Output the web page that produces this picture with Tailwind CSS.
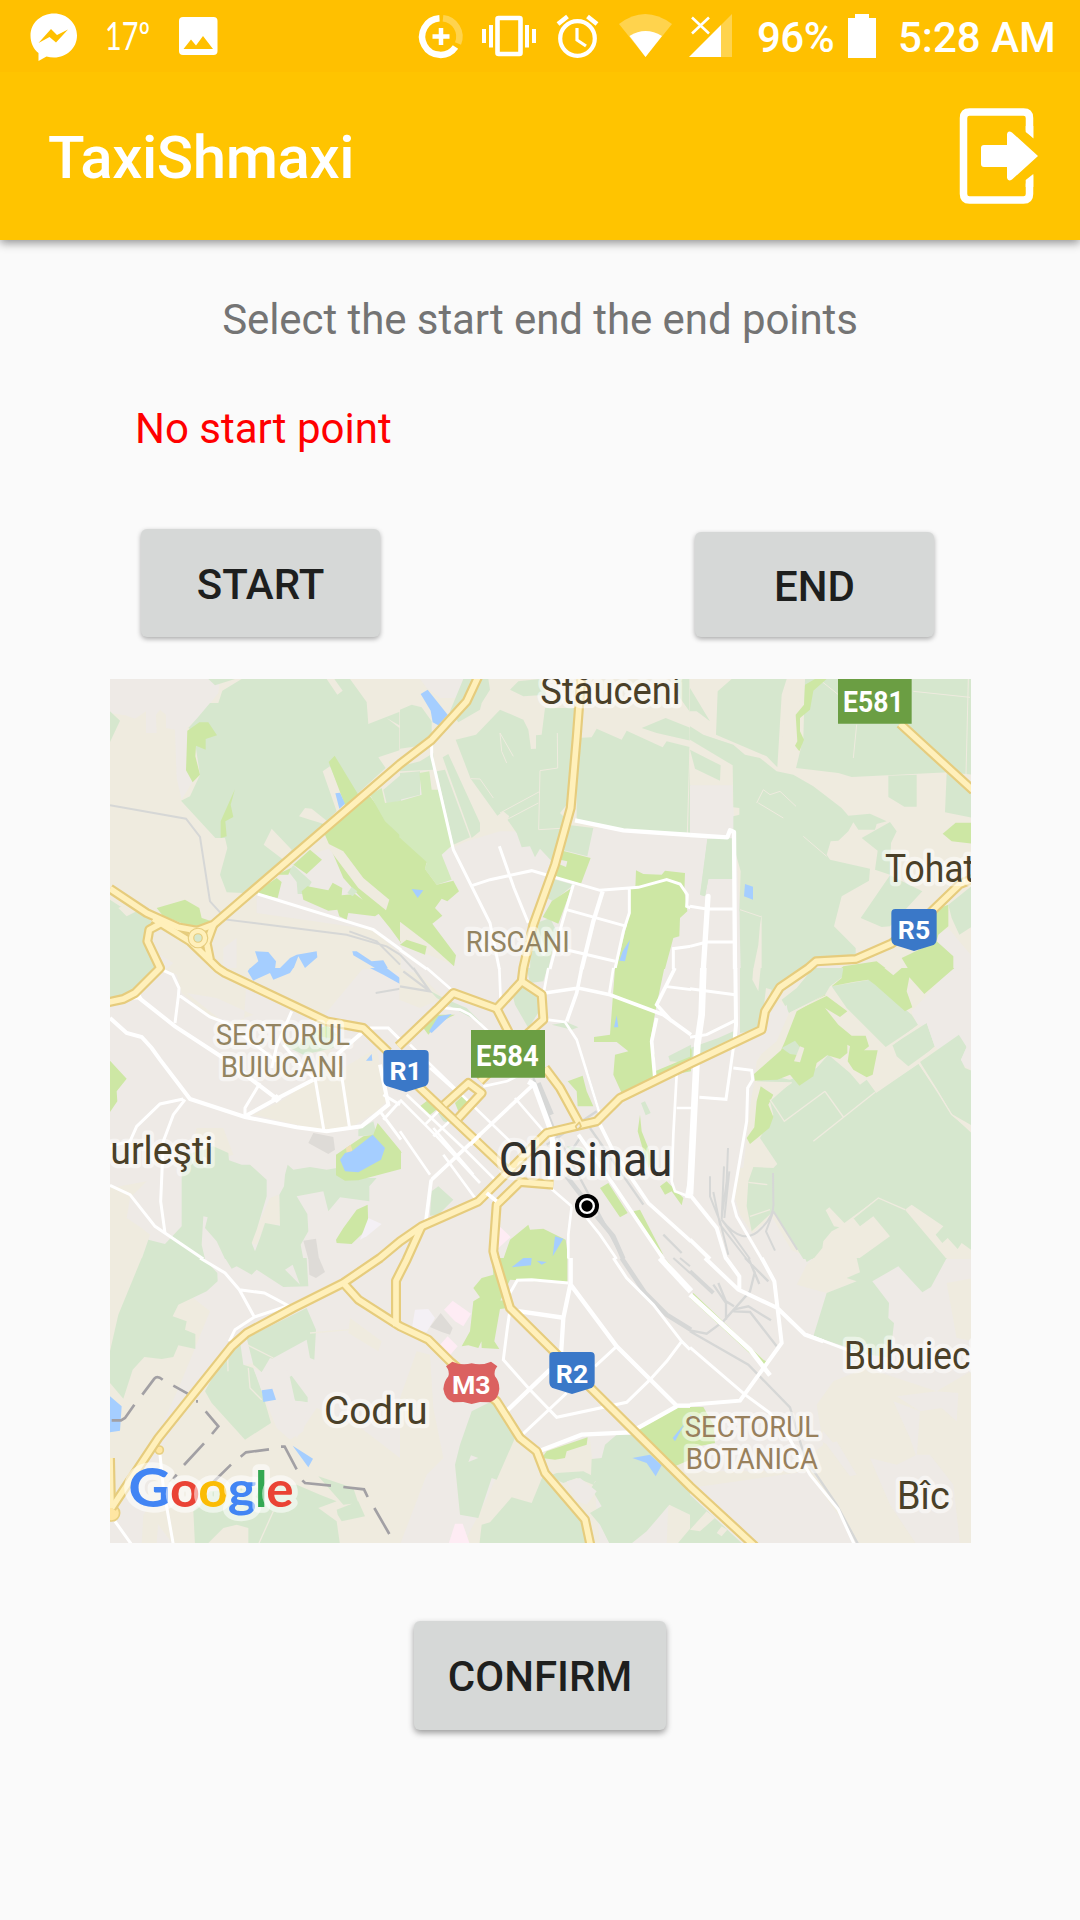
<!DOCTYPE html>
<html lang="en">
<head>
<meta charset="utf-8">
<title>TaxiShmaxi</title>
<script src="https://cdn.jsdelivr.net/npm/@tailwindcss/browser@4"></script>
</head>
<body class="w-[1080px] h-[1920px] bg-[#fafafa] font-['Roboto'] overflow-hidden">
<header class="h-[240px] bg-[#ffc400] shadow-[0_3px_9px_rgba(0,0,0,0.42)] relative">
  <div class="h-[72px] bg-[#ffc000] flex text-white">
    <svg class="w-[90px] h-[72px]" viewBox="0 0 90 72"><path fill="#fff" d="M54 13.5c13 0 23 9.700 23 22S67 57.500 54 57.500q-4-.1-7.500-1l-8 4.500V53c-5-4-8-10-8-17.500 0-12.500 10.500-22 23.500-22z"/><path fill="#ffc000" d="M38.500 43 51 29l6 6 11-5.500L56 42.500l-6.500-5.500z"/></svg>
    <svg class="w-[80px] h-[72px]" viewBox="90 0 80 72"><text x="105" y="50" textLength="45" lengthAdjust="spacingAndGlyphs" font-size="38" font-weight="400" font-family="Lato" fill="#fff">17º</text></svg>
    <svg class="w-[240px] h-[72px]" viewBox="170 0 240 72"><rect x="179" y="17" width="38.500" height="38" rx="4" fill="#fff"/><path fill="#ffc000" d="M183.500 49l7.500-9.500 5 6 7-9.500 10 13z"/></svg>
    <svg class="w-[65px] h-[72px]" viewBox="409.500 0 65 72"><g fill="none" stroke="#fff" stroke-width="6.500"><path d="M439 18.300A18.300 18.300 0 1 0 455 47"/><path opacity=".3" d="M442.500 18.300A18.300 18.300 0 0 1 457.500 43.500"/><path stroke-width="4.500" d="M440.500 28v17M432 36.500h17"/></g></svg>
    <svg class="w-[70px] h-[72px]" viewBox="475 0 70 72"><rect x="497.500" y="18" width="23" height="36" rx="1" fill="none" stroke="#fff" stroke-width="4.600"/><path stroke="#fff" stroke-width="4" d="M484 29v14M491 25v22.500M527 25v22.500M534 29v14"/></svg>
    <svg class="w-[65px] h-[72px]" viewBox="545 0 65 72"><g fill="none" stroke="#fff"><circle cx="577.500" cy="38.500" r="17.300" stroke-width="4.200"/><path stroke-width="3.200" d="M577 28v12l9 6"/><path stroke-width="4.500" d="M558 24l9.500-7.500M597 24l-9.500-7.500"/></g></svg>
    <svg class="w-[70px] h-[72px]" viewBox="610 0 70 72"><path fill="#fff" opacity=".3" d="M619 24q26-20 53 0l-26.500 33z"/><path fill="#fff" d="M629.500 36q16-10 32.500 0L645.500 57z"/></svg>
    <svg class="w-[77px] h-[72px]" viewBox="680 0 77 72"><path fill="#fff" opacity=".3" d="M721 25l11-11v43h-11z"/><path fill="#fff" d="M689 57l32-32v32z"/><path stroke="#fff" stroke-width="2.600" d="M692 17.500l17 16M709 17.500l-17 16"/></svg>
    <span class="w-[90px] text-[42px] leading-[75px] font-medium tracking-[-0.5px] whitespace-nowrap">96%</span>
    <svg class="w-[51px] h-[72px]" viewBox="847 0 51 72"><path fill="#fff" d="M848 18h7v-4h14v4h7v40h-28z"/></svg>
    <span class="text-[42px] leading-[75px] font-medium whitespace-nowrap">5:28 AM</span>
  </div>
  <div class="h-[168px] flex items-center justify-between pl-[48px] pr-[40px]">
    <h1 class="text-[60px] leading-[70px] font-medium text-white pt-[4px] tracking-[-0.4px]">TaxiShmaxi</h1>
    <svg class="w-[84px] h-[100px] mb-[1px]" viewBox="956 106 84 100"><path d="M1029.500 139V118q0-6-6-6h-54q-6 0-6 6v76q0 6 6 6h54q6 0 6-6v-22" fill="none" stroke="#fff" stroke-width="7.500"/><path fill="#ffc400" d="M1021 126l20 20v22l-20 20z"/><path fill="#fff" d="M1025.700 126v6l7.600 6v-12zM1025.700 187v-7l7.600-6v13zM984 145h23v-11q1-4 5-1.500l26 23.500-26 23.500q-4 2.500-5-1.500v-11h-23q-3 0-3-3v-16q0-3 3-3z"/></svg>
  </div>
</header>
<main>
  <p class="pt-[55px] text-[42px] leading-[49px] text-center text-[#747474] tracking-[-0.07px]">Select the start end the end points</p>
  <p class="pt-[60px] pl-[135px] text-[42px] leading-[49px] text-[#ff0000]">No start point</p>
  <div class="mt-[76px] flex items-end justify-between pl-[141px] pr-[146px] text-[42px] font-medium text-[#1e1f1e]">
    <button class="w-[239px] h-[108px] pt-[2px] rounded-[6px] bg-[#d6d8d7] shadow-[0_2px_5px_rgba(0,0,0,0.32)]">START</button>
    <button class="w-[239px] h-[105px] pt-[3px] rounded-[6px] bg-[#d6d8d7] shadow-[0_2px_5px_rgba(0,0,0,0.32)]">END</button>
  </div>
  <!-- Map of Chisinau: three map units per pixel, areas grouped in a 3x3 grid of 870-unit cells -->
  <div class="mt-[42px] ml-[110px] w-[861px] h-[864px] overflow-hidden">
  <svg class="block w-[861px] h-[864px]" viewBox="0 3 2583 2592" font-family="Roboto">
    <defs>
      <g id="major">
        <path d="M1105-5 1070 70 965 185 870 258 310 740 262 758 205 748 110 705 0 632"/>
        <path d="M130 722 240 790 325 872 345 885 650 1030 760 1050 835 1122M262 758 242 770 M310 740 290 795 300 845"/>
        <path d="M155 735 118 755 112 790 150 870 75 945 40 963-5 973"/>
        <path d="M865 1105 980 995 1030 945 1160 992 1235 910 1240 870 1270 740 1335 560 1382 390 1400 180 1414-5"/>
        <path d="M1160 992 1200 1070M1305 1170 1350 1230 1410 1340M1235 910 1295 950 1300 1025 1255 1065 1110 1210"/>
        <path d="M920 1220 1190 1475M1003 1280 1075 1215 1115 1245 1045 1320"/>
        <path d="M5 2490 145 2280 365 2005 410 1965 550 1890 700 1815 810 1740 870 1690 935 1645 1105 1570 1310 1365 1395 1345 1460 1330 1530 1260 1740 1157 1955 1055 1965 1000 2010 928 2095 870 2118 850 2238 843 2344 797 2430 735 2470 695 2550 618 2590 602"/>
        <path d="M1330 1520 1230 1512 1160 1580 1150 1720 1155 1740 1200 1890 1740 2425 1935 2605"/>
        <path d="M700 1815 745 1865 870 1945 955 1985 1020 2050 1160 2170 1230 2280 1280 2320 1305 2385 1425 2525 1442 2605"/>
        <path d="M935 1645 890 1745 858 1808 858 1945M2370 137 2590 338M0 2340 3 2490"/>
      </g>
      <path id="shield" d="M-56 0H56Q68 0 68 12V90Q68 104 56 109L0 126-56 109Q-68 104-68 90V12Q-68 0-56 0Z"/>
    </defs>
    <rect width="2583" height="2600" fill="#eeeae6"/>

    <!-- north-west -->
    <g>
      <path fill="#efebdf" d="M0 0H873V440L600 530 440 650V705L790 755 873 820V873H0z"/>
      <path fill="#eeeae6" d="M0 0H330L325 45 270 115 230 150 245 315 215 365 200 300 195 155 168 150V110L150 95 138 110 140 165H108V100L75 122 45 112 0 105zM445 648 530 590 650 545 740 600 840 690 873 740V830L790 755 720 728zM380 780V873H340V810zM150 830 190 855 170 873H145z"/>
      <path fill="#d6e7ce" d="M395 3H720L770 72 775 138 873 100V215L805 238 827 270 640 440 400 645 350 643 330 590 352 510 345 480 316 480 213 368 240 355 270 290 250 160 235 150 262 120 300 75H325L337 38zM295 3H375L315 22zM0 100 30 128 0 192zM0 665 30 685 110 712 130 740 105 790 140 873H0zM820 335 873 290V370L830 376z"/>
      <path fill="#efebdf" d="M650 3H673L698 38 682 50zM638 280 660 265 710 380 650 440 600 425 567 415 585 390 605 392 650 428 680 400zM485 452 545 515 520 545 461 500zM830 120 873 145 868 150zM50 715 25 690 45 680 80 700z"/>
      <path fill="#d6e7ce" d="M535 580 550 562 605 612 585 648H563L560 612z"/>
      <path fill="#cde7a4" d="M232 158 268 133H295L321 172 287 183V215L258 203 256 235 270 290 248 313 228 277zM375 333 362 380 370 417 346 430 350 475 332 480V430zM656 252 674 233 745 350 705 382zM632 440 660 430 780 355 830 420 873 470V795L840 750 745 632 820 705 780 690 700 600zM600 515 636 545 590 588 550 560zM500 590 543 570 535 590zM435 645 500 600 515 612 503 660zM575 640 592 625 655 637 668 614 697 630 695 652 735 648 810 705 795 715 715 705 710 725 688 715 682 695 655 698 580 665zM140 690 225 665 268 690 275 720 305 730 255 750 160 715z"/>
      <path fill="#d3eabc" d="M780 350 815 330 825 375 873 368V475L825 430z"/>
      <path fill="#d6e7ce" d="M712 645 725 627 742 640 728 655z"/>
      <path fill="#efebdf" d="M640 490 700 520 760 600 838 665 828 697 745 630z"/>
      <path fill="#a5ceff" d="M676 346 690 344 705 377 688 392zM435 820 475 822 498 850 495 873H418L445 850zM510 870 540 840 560 830 620 820 622 838 585 870 565 835 550 873zM727 820 740 820 785 850 820 847 835 873H800L730 832z"/>
      <path fill="none" stroke="#d6d7d6" stroke-width="6" d="M0 382 228 422 270 477 300 670 350 725 710 770 830 805 870 830M718 760 800 790 870 860"/>
      <path fill="none" stroke="#fff" stroke-width="9" d="M443 648 790 755 873 815"/>
    </g>

    <!-- north -->
    <g transform="translate(870 0)">
      <path fill="#efebdf" d="M-2 0H872V450L600 450 360 460 300 460 200 490 155 510 100 340-2 280z"/>
      <path fill="#eeeae6" d="M60 3H190L170 60 120 60 80 30z"/>
      <path fill="#d6e7ce" d="M0 95 35 80 65 88 95 130 95 170 50 205 0 212zM190 3H265L270 35 245 75 240 95 175 133 150 100zM167 185 228 170 300 95 370 125 385 155 393 213 408 212V172L425 170 435 90 530 90 510 390 465 560 420 512 405 538 390 505 365 508 350 465 322 425 328 415 310 400 292 413 212 302zM575 178 590 152 665 185 680 158 788 208 800 190 872 208V465L670 455 530 425V180zM725 150 797 120 872 150V188L770 165zM330 35 355 10 420 3 440 50 370 55zM825 3H872V105L840 60zM0 285 60 280 60 350 0 365zM128 238 145 228 240 435V460L215 480zM110 280 135 275 210 478 160 500zM500 440 580 450 562 535 485 515zM60 250 100 225 100 275 0 280 0 265z"/>
      <path fill="none" stroke="#efebdf" stroke-width="3" d="M472 165 473 270 420 278 416 455 500 450M420 340 300 405M300 165 305 220 320 255M300 165 340 235M212 302 240 303 280 360M415 375 320 425M870 205 862 465"/>
      <path fill="#efebdf" d="M480 405 500 380 512 395 495 420z"/>
      <path fill="#d6e7ce" d="M450 600 520 620 460 670 430 655zM395 740 450 720 470 760 445 873H390z"/>
      <path fill="#d3eabc" d="M58 285 88 280 95 335 115 335 158 500 125 530 155 605 110 620 75 573 80 555-2 480V370L65 350z"/>
      <path fill="#efebdf" d="M0 730 170 865 60 820 0 790z"/>
      <path fill="#cde7a4" d="M-2 478 80 552 75 573 110 620 160 608 177 640 142 670 125 662 105 690 127 713 97 737 168 832 162 865 90 800-2 730zM20 785 80 805 75 830 0 800zM488 518 572 540 543 617 460 595zM455 670 515 630 475 737 428 717zM708 577 730 588 785 590 795 578 855 585 853 640 862 700 840 720 838 775 820 780 795 873H648L690 700V630H706z"/>
      <path fill="#eeeae6" d="M480 545 502 550 498 567 476 558z"/>
      <path fill="#a5ceff" d="M62 48 83 35 143 110 115 142 98 133 92 98zM35 633 70 637 53 660zM690 785 675 850 658 848 668 820z"/>
      <g fill="none" stroke="#fff" stroke-width="9">
        <path d="M95 200V235L160 515 270 735 298 873M298 505 342 630 385 735M218 622 270 605 395 578 430 588 600 637 715 628 800 605 840 618 862 650 860 685 873 690M520 620 485 740 450 873M500 695 680 745M688 628V705L670 760 645 873M505 817 645 850M820 873V812L873 805"/>
        <path stroke-width="13" d="M525 427 670 457 873 471M608 640 580 730 545 873"/>
        <path d="M0 815 80 873"/>
      </g>
      <path fill="none" stroke="#d6d7d6" stroke-width="6" d="M0 830 40 873"/>
    </g>

    <!-- north-east -->
    <g transform="translate(1740 0)">
      <path fill="#efebdf" d="M-2 0H850V873H460L150 700 130 380 0 320z"/>
      <path fill="#d6e7ce" d="M0 30 60 130 20 100 0 100zM78 170 83 40 125 3H290L275 50 262 268 230 235zM0 145 40 170 130 200 165 230 210 240 260 280 310 290 370 325 455 390 475 413 540 407 590 430 560 438 555 455 505 455 490 433 475 460 445 488 422 490 410 530 420 545 540 572 537 608 455 655 432 745 497 810 497 830 350 873H148V700L152 580 130 500V415L148 410V390L130 388 128 262 0 185zM15 272 90 308 92 262 0 215zM345 3H850V290L775 283 485 297 445 285 318 270 340 180zM595 293 680 290V386H643L595 357zM770 285 850 340V420L765 403zM515 480 600 432 620 460 603 495 600 590 555 575 563 518zM600 592 697 640 600 745 575 747 512 720zM775 680 850 620V743L808 770 785 720zM52 483 130 480V603H55L45 655 30 650z"/>
      <path fill="#efebdf" d="M310 3H345L318 110 320 180 275 240 285 45H300zM215 710V873H190L205 800 210 740z"/>
      <path fill="none" stroke="#efebdf" stroke-width="3" d="M200 375 220 335 240 350 270 340 318 385M340 475 410 535M205 375 280 420M150 695 215 717M670 40 840 58M395 10 445 50M835 3 828 290M500 140 490 240"/>
      <path fill="#eeeae6" d="M0 322H128V480H52L30 655V700H148L152 873H0V330zM740 770 775 750 850 840V873H780L750 830z"/>
      <path fill="#d6e7ce" d="M52 483 127 485V603H55L45 655 30 650z"/>
      <path fill="#cde7a4" d="M345 20 375 3H410L370 38 360 95 330 120V160L342 185 328 220 315 203 322 190 317 110 342 80zM758 467 797 434H850V497L785 490zM635 840 740 790 745 770 775 745V680L720 700 740 790 790 835V873H655zM460 865 560 850 590 873H450zM740 790 755 832 740 828 725 805z"/>
      <path fill="#a5ceff" d="M165 618 189 626V665L162 655z"/>
      <g fill="none" stroke="#fff" stroke-width="9">
        <path stroke-width="13" stroke-linejoin="round" d="M0 471 112 478 120 457 132 462 135 873"/>
        <path d="M0 685 50 693H135M0 805 50 792H135"/>
        <path stroke-width="16" stroke-linecap="round" d="M54 655 40 873"/>
      </g>
    </g>

    <!-- west -->
    <g transform="translate(0 870)">
      <path fill="#efebdf" d="M165 0H873V50L870 15 760 0 640 145 410 25 400 190 300 145 215 75 200 20 160 5zM350 170 430 140 320 90 230 75zM520 395 610 330 620 310 620 240 660 245 700 300 800 240 830 400 800 430 720 480 640 490 430 440zM0 660 110 640 60 690 50 750 95 780 120 800 95 873H0zM260 480 340 480 370 560 300 580 250 520zM480 690 505 680 520 770 465 770 440 830 420 825z"/>
      <path fill="#d6e7ce" d="M0 0H140L80 75 0 100zM215 610 230 560 310 535 355 555 357 577 395 590H420L470 635V685L440 785 425 825 435 850 450 810 465 765 510 773 508 680 522 655 525 620 533 590 550 605 600 597 650 605 680 600 700 630 800 630 778 655V700L690 688 655 730 640 670 560 685 592 738 595 790 572 830 580 873H345L320 820 285 780 293 748 280 745 275 830 285 873H95L115 815 165 828 215 775zM745 485 790 460 800 500 745 505zM520 230 620 200 680 200 670 240 580 260z"/>
      <path fill="#cde7a4" d="M0 278 50 332 20 370 22 400 0 432zM678 560 760 505 790 500 803 465 873 550V603L745 637 705 638 678 622zM700 780 740 725 773 710 775 780 725 828 680 825 678 815zM600 200 650 170 680 200 660 210z"/>
      <path fill="#efe0b5" d="M708 540 722 530 728 550 710 555z"/>
      <path fill="#a5ceff" d="M413 10 420 0H550L540 15 490 35 480 15 430 38zM780 0H830L870 30V48L820 20zM690 575 705 555 725 550 788 500 825 540 813 575 745 613 705 610zM768 278 785 258 787 278z"/>
      <path fill="#dedbd7" d="M610 495 670 507 675 545 655 558 595 525zM580 818 618 812 627 873H595z"/>
      <path fill="#f4f0f5" d="M775 750 815 768 770 805 750 815z"/>
      <path fill="none" stroke="#d6d7d6" stroke-width="6" d="M797 75 870 62"/>
      <g fill="none" stroke="#fff" stroke-width="9">
        <path stroke-width="12" d="M50 90 85 88 195 175 340 270 500 392M0 150 50 195 95 207 125 240 150 275 240 393 405 447 560 478 650 490 755 475 835 410 810 290M405 445 500 392 610 335M680 260 755 195"/>
        <path d="M155 5 188 20 207 60 205 85 195 165M205 80 300 147 350 165 500 280M545 130 500 235 485 300M405 445V420L450 345M520 230 580 300 610 330M615 330 642 490M690 290 718 475M220 393 150 408 80 475 60 520 0 535M225 395 190 440 160 520 152 700 165 795M0 652 60 680 135 775 280 873M780 180 835 180 870 215M820 380 870 410M810 430 873 515M820 455 870 400"/>
      </g>
      <path fill="#fff" d="M70 90 85 68 100 95zM483 393 500 378 515 392 500 405z"/>
    </g>

    <!-- centre -->
    <g transform="translate(870 870)">
      <path fill="#efebdf" d="M-2 0 60 20 130 90 60 120-2 95zM808 270 873 240V280L808 295z"/>
      <path fill="#d6e7ce" d="M380 0H442L430 40 390 45zM365 50 418 85V130L385 180 345 110 340 90zM90 68 130 90 200 120 245 165 215 150 150 115 110 90zM95 670 115 655 160 695 115 740 90 743zM455 170 500 163 535 178 515 185zM723 405 735 400 752 435 737 442zM110 430 165 455 160 470 130 460zM500 535 545 540 560 560 520 555zM805 265 873 230V285L810 280z"/>
      <path fill="#cde7a4" d="M645 0H793L768 120 760 165 750 220 765 265 765 330 665 375 640 320 645 260 685 250 650 222 582 222V207L630 200zM503 340 548 323 560 370 580 415H533L530 370zM720 440 725 490 745 540 755 575 745 600 713 490zM60 415 85 395 115 420 85 445zM165 405 190 380 205 400 175 430zM70 180 110 140H165L115 165 85 200zM600 660 625 645 683 735 660 748zM780 655 800 640 850 690 845 712 815 670 795 680zM700 730 720 725 790 860 760 830zM310 873 330 815 385 770 390 785 430 782 497 815 505 873zM765 310 873 265V310L770 330zM0 550 5 553 0 560z"/>
      <path fill="#a5ceff" d="M115 145 155 138 95 195 87 190zM650 142 655 178 642 178zM465 805 490 812 458 865z"/>
      <path fill="#feecf4" d="M295 772 332 807 293 842z"/>
      <path fill="none" stroke="#d6d7d6" stroke-width="7" d="M40 0 90 70 0 55M10 10 90 70M285 130 330 230M400 330 470 500 670 873M560 310 600 440M570 480 730 710M440 530 590 430M500 570 540 510M790 800 845 855"/>
      <path fill="none" stroke="#d6d7d6" stroke-width="14" d="M415 345 455 440M500 625 550 690M590 745 640 805 670 873"/>
      <g fill="none" stroke="#fff" stroke-width="8">
        <path d="M80 0 160 70M298 0 302 100M130 120 180 125 210 140 270 195M445 0 430 80M640 0 628 75M440 155 495 162 530 215 600 440M75 470 125 420M30 230 200 395 340 530M90 300 180 380M250 355 320 340 360 320M345 390 440 500M100 505 170 440M0 395 110 505 240 645M0 490 90 620M20 380 190 540 290 640M100 480 220 620M130 560 225 690M795 55 873 65M830 320 820 500 815 640 825 670 865 685M830 420 873 420M440 650 515 715M515 715 505 800V873M560 750 600 800 650 873"/>
        <path stroke-width="11" d="M435 75 535 60 630 80 790 140 873 200M545 0 530 75 500 160M825 0 770 110 815 160M770 150 755 220 765 335M95 635 400 350M77 765 93 640 95 635M600 470 640 550 745 705 873 820M535 500 640 650 790 873"/>
        <path stroke-width="16" d="M385 340 402 350 450 480 458 520 452 640M873 630 862 690"/>
      </g>
    </g>

    <!-- east -->
    <g transform="translate(1740 870)">
      <path fill="#efebdf" d="M210 60 250 40 480 0H680L770 0 730 60 665 130 740 240 850 310V873H370L190 800 150 740 135 690 150 580 195 330 200 280 300 130 270 100 220 160z"/>
      <path fill="#d6e7ce" d="M150 0H370L270 60 215 130 210 185 150 195zM370 0H460V25L420 55 405 80 297 135 275 95 320 60zM425 55 540 35 665 140 685 172 587 237 470 120zM607 230 710 165 735 237 655 295 620 265zM690 282 810 198 830 237 813 275 825 300 850 310V475L785 438 745 370zM240 400 305 343 200 340 250 325 300 335 380 300 415 260 480 315 510 350 530 335 557 373 685 287 745 375 785 440 850 500V850L815 825 803 843 773 810 757 825 737 800 760 775 665 710 645 725 565 690 463 765 418 718 407 727 432 775 448 778 425 790 400 820 397 840 370 873H340L250 730 185 790 170 715 175 640 190 597 250 600 262 588 210 510 250 440zM490 750 565 690 645 725 770 873H505L600 805 550 745 510 775zM85 210 130 190V220L0 270V240z"/>
      <path fill="#efebdf" d="M190 0H212L205 70 187 35zM228 60 245 65 220 130z"/>
      <path fill="#eeeae6" d="M790 10 850 0V305L830 300 813 275 830 237 805 198 735 237 710 165 685 172 665 135 730 65zM245 745 320 873H100L130 800 190 795zM150 220 210 195 290 110 295 140 260 220 200 270 190 330 160 600H130z"/>
      <path fill="#cde7a4" d="M460 0H583L610 22 635 0H793L703 78 658 28 650 70 667 118 645 130 555 50 535 35 490 42 425 55 455 30zM320 130 405 80 472 130 450 147 405 120 445 170 485 203H527L537 235 522 247H563L548 320 530 328 490 305 473 280 480 235 472 230V255L450 273 412 262 380 285 370 325 328 353 300 320 262 335 195 338 192 318 273 247 285 220zM212 355 250 380 235 410 250 447 238 480 180 528 170 510 193 478 200 400zM0 240 5 245V275H0z"/>
      <path fill="#d6e7ce" d="M275 240 315 218 332 240 325 262 300 258z"/>
      <path fill="#efebdf" d="M330 235 343 240 330 283 312 280 318 265z"/>
      <path fill="none" stroke="#efebdf" stroke-width="4" d="M300 135 410 82 425 55M607 230 685 172M240 395 260 425 283 460 405 370M250 380 305 343M557 373 690 282M555 373 370 520M405 370 460 447M735 237 685 282 745 375 785 440 850 490M175 643 232 650M180 745 240 725M490 750 565 690 645 725"/>
      <g fill="none" stroke="#d6d7d6" stroke-width="6"><path d="M114 540 110 640 95 750M60 625V685L90 760 115 860M102 595 95 755M118 610 103 750M70 672 90 770 170 873M95 755Q160 840 215 780 255 740 250 700L249 615M250 730 322 845M250 730 228 790 255 848M95 755 180 873"/></g>
      <g fill="none" stroke="#fff" stroke-width="9">
        <path d="M0 62 135 80M0 208 50 200 135 158M130 300 185 307 188 335 173 360 170 460 128 700 140 745 215 873M28 388 108 394 130 240"/>
        <path stroke-width="12" d="M136 0 138 170 132 240M0 680 80 780 108 873M0 815 60 873"/>
        <path stroke-width="20" d="M40 0 35 140 22 230 0 680"/>
      </g>
    </g>

    <!-- south-west -->
    <g transform="translate(0 1740)">
      <path fill="#efebdf" d="M0 0H100L300 160 210 380 130 560 0 740zM300 350 480 300 560 540 620 450 740 500 870 600V860H190L100 740 170 540zM720 180 815 250 805 280 780 265 715 225zM100 770 150 700 140 860H95z"/>
      <path fill="#d6e7ce" d="M95 0H280L322 45 323 70 290 100 205 140 188 175 230 190 225 215 256 228V273L205 262 190 297 155 303 103 297 68 335 40 422 0 375V280L25 170zM345 0H590L595 85 520 87 440 35 425 50 380 25 365 32zM350 280 390 250 400 320 430 330 450 380 483 495 405 545 305 435 285 400zM410 240 590 150 618 215 613 305 600 300 590 245 490 300 455 343 430 320zM522 365 545 353 593 418V433L555 428zM250 760 300 700 420 690 560 680 630 710 680 730 625 750 680 790 690 860H415V810L380 800 340 810 290 860H255zM680 755 745 730 765 775 695 790 683 770zM625 655 730 690 745 735 700 740z"/>
      <path fill="#eeeae6" d="M525 35 548 20 570 80zM480 300 520 310 540 360 555 428 593 433 580 520 540 545 500 510 455 400 430 330 455 343z"/>
      <path fill="none" stroke="#efebdf" stroke-width="4" d="M410 260 490 300M415 330 420 390 455 425M353 300 354 340M445 860 490 760M600 225 720 215"/>
      <path fill="#dedbd7" d="M595 0H627L645 42 618 60 598 50z"/>
      <path fill="#a5ceff" d="M0 415 35 445 30 518 0 523zM455 397 487 392 498 425 460 432zM548 563 609 602 595 628z"/>
      <path fill="none" stroke="#a2a0a4" stroke-width="8" d="M5 487H33L45 480 73 440M97 410 133 362Q142 352 158 365M190 383 233 407M258 430H264M287 460 325 505 306 528M282 556 222 621M200 650 190 663M310 672 363 620M392 596 408 583 477 574M513 566H524L560 634M577 667 585 675 663 683M700 687 762 694 773 717M793 750 838 828"/>
      <path fill="none" stroke="#fff" stroke-width="9" d="M270 0 345 45 388 95 433 177M388 95 463 105 535 143 433 177 375 215 358 250M150 590 160 690 190 860M15 790 65 860"/>
      <g fill="#ffe6a2" stroke="#e8cf80" stroke-width="5"><circle cx="5" cy="765" r="24"/><circle cx="148" cy="576" r="12"/></g>
    </g>

    <!-- south -->
    <g transform="translate(870 1740)">
      <path fill="#efebdf" d="M0 420 50 280 90 290 100 450 130 600 80 650 0 860zM340 540 410 580 570 540 600 860H190L270 700zM810 610 873 580V860H800z"/>
      <path fill="#d6e7ce" d="M165 620 180 560 215 460 275 430 345 540 290 665 275 660 235 780 180 770zM238 860 245 800 270 793 335 718 395 735 430 650 555 785 570 860zM445 655 470 645 550 640 590 660 580 680 530 660 490 675zM575 603 605 600 615 560 650 530 700 530 870 690V770L808 740 740 820 690 860H630L600 800 570 765 605 745 573 690 587 670 573 650zM830 860 870 812V860z"/>
      <path fill="#eeeae6" d="M205 612 213 592 235 600zM500 670 540 660 590 700 560 740 530 730z"/>
      <path fill="#cde7a4" d="M275 0H502V75L330 65 235 270 205 262 185 265 210 220 220 130 240 118 220 90 245 60 280 50zM240 120 328 130 325 150 300 153 283 250 298 273 245 270zM425 600 440 580 563 538 560 560 500 580 495 600 465 605zM695 525 830 450H870V605L825 625zM795 0 873 100 850 80z"/>
      <path fill="#a5ceff" d="M335 28 370 0H395L393 22zM410 8 440 12 425 20zM697 600 750 590 785 622 767 655 740 615zM818 540 855 495 825 550z"/>
      <path fill="#feecf4" d="M132 155 158 128 213 167 190 205 165 190zM120 260 143 235 173 265 150 292zM165 797H188L210 860H145z"/>
      <path fill="#f4f0f5" d="M45 155 85 153 105 180 80 222 35 215z"/>
      <path fill="#dedbd7" d="M90 207 122 165 158 210 150 230 125 222z"/>
      <path fill="none" stroke="#d6d7d6" stroke-width="14" d="M665 0 735 105 800 170 873 215"/>
      <path fill="none" stroke="#d6d7d6" stroke-width="6" d="M820 0 870 45M840 0 870 25"/>
      <g fill="none" stroke="#fff" stroke-width="9">
        <path d="M330 105 352 67 395 65 505 75M330 155 322 210 310 305 385 390 470 478 680 433 750 365 800 310 845 250M650 265 585 325M370 527 500 405M640 0 680 60 760 140 845 250 870 275"/>
        <path stroke-width="13" d="M512 0V75L490 180 483 290M345 158 495 180M512 80 650 265 830 443H873M420 578 545 530 690 523 830 445M322 457 450 335"/>
        <path stroke-width="18" d="M780 0 873 100"/>
      </g>
    </g>

    <!-- south-east -->
    <g transform="translate(1740 1740)">
      <path fill="#efebdf" d="M370 0H560L500 70 410 105 320 80 350 20zM770 75 850 60V250L800 240zM380 440 430 370 530 330 620 360 740 400 850 335V860H510L350 640 0 690V640L300 640 400 560z"/>
      <path fill="#eeeae6" d="M440 550 500 650 480 655 410 560zM610 430 690 460 680 600 660 540zM740 400 805 405 800 490 755 450 690 460 620 415zM540 600 620 620 680 590 720 590 790 680 810 860H680L600 740zM380 540 400 520 460 590z"/>
      <path fill="#d6e7ce" d="M500 0H770L723 87 697 103 625 25 547 70 597 135 595 180 612 195 600 300 540 290 370 235 410 105 500 70 470 60 510 43zM345 0H370L350 12zM0 710 160 860H0z"/>
      <path fill="#efebdf" d="M0 815 50 760 75 780 30 820zM95 805 112 815 95 835 80 825z"/>
      <path fill="#cde7a4" d="M0 447H40L70 500 75 555 0 570zM10 105 220 305 235 313 225 325 205 310 0 120z"/>
      <path fill="#a5ceff" d="M0 470 10 475 0 490z"/>
      <g fill="none" stroke="#d6d7d6" stroke-width="7">
        <path stroke-width="12" d="M0 40 70 105"/>
        <path d="M70 80 108 135V185M85 75 108 130 132 145M165 0 235 70M175 0 208 78M195 40 180 100 100 190 50 227 0 217M130 155 175 145 243 187M130 160 180 162 260 265M0 220 175 320 300 448 345 600 440 740 505 860"/>
      </g>
      <g fill="none" stroke="#fff" stroke-width="9">
        <path d="M0 268 165 410 240 465 300 545 360 650 445 755 493 860M350 230 470 275 575 340"/>
        <path stroke-width="12" d="M45 0 145 95 262 150 345 230 400 250M108 0 148 55V95M215 0 253 70 275 255 150 428 0 440"/>
        <path stroke-width="14" d="M0 110 180 275 240 352"/>
      </g>
    </g>

    <g fill="none" stroke-linejoin="round">
      <use href="#major" stroke="#e6cc7d" stroke-width="30"/>
      <use href="#major" stroke="#fff0bb" stroke-width="17"/>
      <circle cx="264" cy="780" r="21" fill="#d6e7ce" stroke="#e6cc7d" stroke-width="20"/>
      <circle cx="264" cy="780" r="21" stroke="#fff0bb" stroke-width="13"/>
      <path fill="#efebdf" stroke="#e6cc7d" stroke-width="5" d="M1397 1345 1408 1333 1413 1345 1402 1356z"/>
      <path stroke="#fff" stroke-width="12" d="M1080 1400 1110 1370M1130 1545 1160 1570"/>
    </g>

    <!-- place names -->
    <g fill="#4a4028" stroke="#fff" stroke-opacity=".5" stroke-width="26" stroke-linejoin="round" paint-order="stroke" font-size="116">
      <text x="1291" y="79" textLength="421" lengthAdjust="spacingAndGlyphs">Stăuceni</text>
      <text x="2325" y="612" textLength="355" lengthAdjust="spacingAndGlyphs">Tohatin</text>
      <text x="310" y="1458" text-anchor="end" textLength="383" lengthAdjust="spacingAndGlyphs">Durleşti</text>
      <text x="642" y="2239" textLength="311" lengthAdjust="spacingAndGlyphs">Codru</text>
      <text x="2202" y="2073" textLength="405" lengthAdjust="spacingAndGlyphs">Bubuieci</text>
      <text x="2361" y="2494" textLength="158" lengthAdjust="spacingAndGlyphs">Bîc</text>
      <g fill="#938461" font-size="90">
        <text x="1067" y="822" textLength="312" lengthAdjust="spacingAndGlyphs">RISCANI</text>
        <text x="317" y="1100" textLength="403" lengthAdjust="spacingAndGlyphs">SECTORUL</text>
        <text x="332" y="1196" textLength="372" lengthAdjust="spacingAndGlyphs">BUIUCANI</text>
      </g>
      <g fill="#98805c" font-size="90">
        <text x="1724" y="2277" textLength="403" lengthAdjust="spacingAndGlyphs">SECTORUL</text>
        <text x="1727" y="2372" textLength="397" lengthAdjust="spacingAndGlyphs">BOTANICA</text>
      </g>
      <text x="1166" y="1495" font-size="143" fill="#33312c" textLength="521" lengthAdjust="spacingAndGlyphs">Chisinau</text>
    </g>
    <circle cx="1431" cy="1584" r="36"/><circle cx="1431" cy="1584" r="20.500" fill="none" stroke="#fff" stroke-width="7"/>

    <!-- route signs -->
    <path fill="#6b9e43" d="M2184 3H2405V137H2184zM1083 1056H1305V1199H1083z"/>
    <g fill="#3a78c8"><use href="#shield" x="2412" y="693"/><use href="#shield" x="888" y="1116"/><use href="#shield" x="1386" y="2022"/></g>
    <path fill="#db6160" d="M1008 2065 1027 2051Q1055 2064 1085 2056 1115 2064 1143 2051L1162 2065Q1150 2080 1155 2095 1168 2110 1168 2133 1165 2165 1140 2173L1110 2172 1085 2178 1060 2172 1030 2173Q1005 2165 1000 2133 1002 2110 1015 2095 1020 2080 1008 2065z"/>
    <g fill="#fff" font-weight="700" text-anchor="middle">
      <g font-size="89"><text x="2290" y="102" textLength="182" lengthAdjust="spacingAndGlyphs">E581</text><text x="1192" y="1164" textLength="188" lengthAdjust="spacingAndGlyphs">E584</text></g>
      <g font-size="79"><text x="2412" y="783" textLength="97" lengthAdjust="spacingAndGlyphs">R5</text><text x="887" y="1206" textLength="97" lengthAdjust="spacingAndGlyphs">R1</text><text x="1386" y="2114" textLength="97" lengthAdjust="spacingAndGlyphs">R2</text><text x="1084" y="2147" textLength="116" lengthAdjust="spacingAndGlyphs">M3</text></g>
    </g>
    <g font-family="Lato" font-weight="700" font-size="150" stroke="#fff" stroke-opacity=".55" stroke-width="34" stroke-linejoin="round" paint-order="stroke">
      <text x="55" y="2487" font-size="161" fill="#4285f4" textLength="128" lengthAdjust="spacingAndGlyphs">G</text>
      <text x="180" y="2487" fill="#ea4335" textLength="90" lengthAdjust="spacingAndGlyphs">o</text>
      <text x="265" y="2487" fill="#fbbc05" textLength="90" lengthAdjust="spacingAndGlyphs">o</text>
      <text x="353" y="2487" fill="#4285f4" textLength="86" lengthAdjust="spacingAndGlyphs">g</text>
      <text x="435" y="2487" fill="#34a853">l</text>
      <text x="469" y="2487" fill="#ea4335" textLength="82" lengthAdjust="spacingAndGlyphs">e</text>
    </g>
  </svg>
  </div>
  <div class="mt-[78px] pl-[414px]">
    <button class="w-[252px] h-[109px] pt-[2px] rounded-[6px] bg-[#d6d8d7] shadow-[0_3px_6px_rgba(0,0,0,0.38)] text-[42px] font-medium text-[#1e1f1e]">CONFIRM</button>
  </div>
</main>
</body>
</html>
